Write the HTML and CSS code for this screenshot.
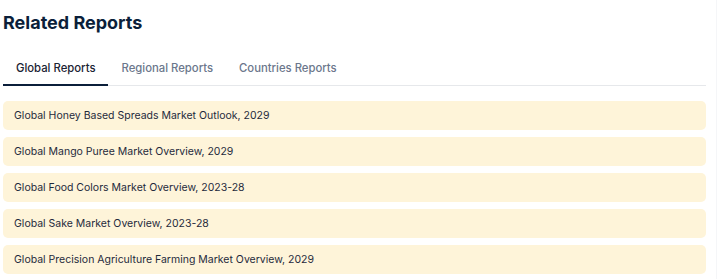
FILE: index.html
```html
<!DOCTYPE html>
<html lang="en">
<head>
    <meta charset="UTF-8">
    <meta name="viewport" content="width=device-width, initial-scale=1.0">
    <title>Related Reports</title>
    <link rel="stylesheet" href="styles.css">
</head>
<body>
    <div class="page">
        <section class="related">
            <h2>Related Reports</h2>

            <div class="tabs">
                <span class="tab active">Global Reports</span>
                <span class="tab">Regional Reports</span>
                <span class="tab">Countries Reports</span>
            </div>

            <ul class="report-list">
                <li>Global Honey Based Spreads Market Outlook, 2029</li>
                <li>Global Mango Puree Market Overview, 2029</li>
                <li>Global Food Colors Market Overview, 2023-28</li>
                <li>Global Sake Market Overview, 2023-28</li>
                <li>Global Precision Agriculture Farming Market Overview, 2029</li>
            </ul>
        </section>
    </div>
</body>
</html>
```

FILE: styles.css
```css
body {
    font-family: 'Inter', 'Liberation Sans', sans-serif;
    background-color: #fff;
    margin: 0;
    color: #1f2a3c;
}

.page {
    width: 716px;
    height: 279px;
    border-right: 1px solid #f5f6f8;
    overflow: hidden;
}

.related {
    width: 703px;
    padding-left: 3px;
}

h2 {
    font-size: 18px;
    font-weight: 700;
    color: #0b1f3a;
    margin: 0;
    padding-top: 12px;
    line-height: 22px;
}

.tabs {
    display: flex;
    margin-top: 27px;
    border-bottom: 1px solid #e6e8eb;
}

.tab {
    font-size: 11.3px;
    font-weight: 500;
    color: #6b778c;
    padding: 0 13px 9px;
    line-height: 14px;
    cursor: pointer;
}

.tab.active {
    color: #1a2333;
    border-bottom: 2px solid #0b1f3a;
    margin-bottom: -1px;
}

.report-list {
    list-style: none;
    margin: 15px 0 0;
    padding: 0;
    display: flex;
    flex-direction: column;
    gap: 7px;
}

.report-list li {
    background-color: #fef4d9;
    border-radius: 5px;
    height: 29px;
    display: flex;
    align-items: center;
    padding: 0 11px;
    font-size: 10.5px;
    color: #1f2a3c;
}
```
